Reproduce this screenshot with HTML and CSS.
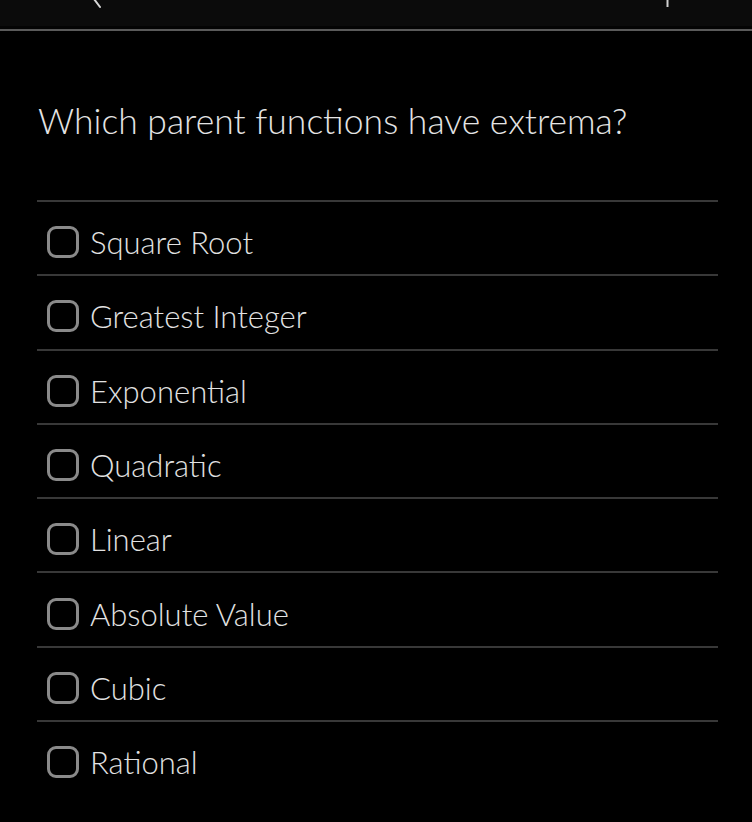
FILE: index.html
```html
<!DOCTYPE html>
<html lang="en">
<head>
<meta charset="utf-8">
<title>Question</title>
<link rel="stylesheet" href="styles.css">
</head>
<body>
<header class="topbar">
  <svg class="chev" width="10" height="9" viewBox="0 0 10 9"><path d="M2 -1 L8 7" stroke="#d8d8d8" stroke-width="2" fill="none" stroke-linecap="round"/></svg>
  <svg class="mark" width="3" height="8" viewBox="0 0 3 8"><rect x="0.5" y="0" width="2" height="7" fill="#d0d0d0"/></svg>
</header>
<main class="content">
  <h1 class="question">Which parent functions have extrema?</h1>
  <ul class="options">
    <li class="option"><span class="box"></span><span class="label">Square Root</span></li>
    <li class="option"><span class="box"></span><span class="label">Greatest Integer</span></li>
    <li class="option"><span class="box"></span><span class="label">Exponential</span></li>
    <li class="option"><span class="box"></span><span class="label">Quadratic</span></li>
    <li class="option"><span class="box"></span><span class="label">Linear</span></li>
    <li class="option"><span class="box"></span><span class="label">Absolute Value</span></li>
    <li class="option"><span class="box"></span><span class="label">Cubic</span></li>
    <li class="option"><span class="box"></span><span class="label">Rational</span></li>
  </ul>
</main>
</body>
</html>
```
FILE: styles.css
```css
html, body {
  margin: 0;
  padding: 0;
  background: #000;
  height: 100%;
}
body {
  font-family: Lato, "Open Sans", sans-serif;
  font-weight: 300;
  color: #e6e6e6;
  font-variant-ligatures: common-ligatures;
}
.topbar {
  height: 26px;
  background: #0b0b0b;
  border-bottom: 3px solid #040404;
  box-shadow: 0 2px 0 #5a5a5a;
  display: flex;
  align-items: flex-start;
  justify-content: space-between;
  padding: 0 83px 0 92px;
}
.chev, .mark { display: block; }
.content {
  padding: 0 34px 0 37px;
}
.question {
  margin: 0;
  padding: 69px 0 0 1px;
  height: 171px;
  box-sizing: border-box;
  font-size: 35.5px;
  font-weight: 300;
  line-height: 46px;
  color: #e4e4e4;
}
.options {
  list-style: none;
  margin: 0;
  padding: 0;
}
.option {
  display: flex;
  align-items: center;
  gap: 11px;
  height: 74.3px;
  box-sizing: border-box;
  border-top: 2px solid #383838;
  padding: 8px 0 0 10px;
}
.box {
  width: 32px;
  height: 32px;
  box-sizing: border-box;
  border: 3px solid #8a8a8a;
  border-radius: 9px;
  flex: none;
}
.label {
  font-size: 31px;
  line-height: 38px;
  color: #e2e2e2;
}
```
